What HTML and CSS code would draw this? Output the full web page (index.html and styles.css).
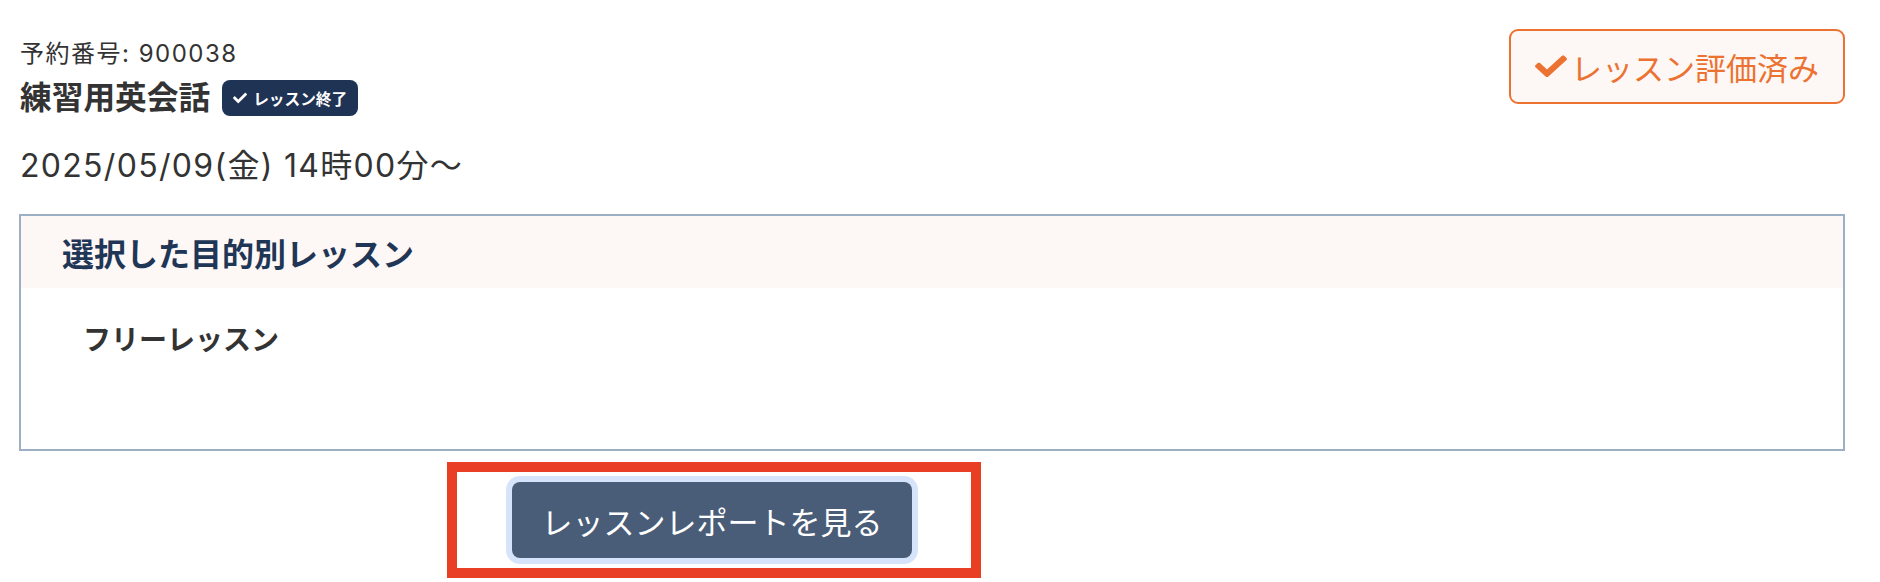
FILE: index.html
```html
<!DOCTYPE html>
<html lang="ja">
<head>
<meta charset="utf-8">
<title>予約詳細</title>
<link rel="stylesheet" href="styles.css">
</head>
<body>
<div class="page">
  <div class="top">
    <div class="info">
      <div class="resv-no">予約番号: 900038</div>
      <div class="title-row">
        <span class="title">練習用英会話</span>
        <span class="badge">
          <svg class="badge-check" viewBox="0 0 512 512"><path d="M173.898 439.404l-166.4-166.4c-9.997-9.997-9.997-26.206 0-36.204l36.203-36.204c9.997-9.998 26.207-9.998 36.204 0L192 312.69 432.095 72.596c9.997-9.997 26.207-9.997 36.204 0l36.203 36.204c9.997 9.997 9.997 26.206 0 36.204l-294.4 294.401c-9.998 9.997-26.207 9.997-36.204-.001z"/></svg>
          <span>レッスン終了</span>
        </span>
      </div>
      <div class="date">2025/05/09(金) 14時00分〜</div>
    </div>
    <button class="rated">
      <svg class="rated-check" viewBox="0 40 512 440" preserveAspectRatio="none"><path d="M173.898 439.404l-166.4-166.4c-9.997-9.997-9.997-26.206 0-36.204l36.203-36.204c9.997-9.998 26.207-9.998 36.204 0L192 312.69 432.095 72.596c9.997-9.997 26.207-9.997 36.204 0l36.203 36.204c9.997 9.997 9.997 26.206 0 36.204l-294.4 294.401c-9.998 9.997-26.207 9.997-36.204-.001z"/></svg>
      <span>レッスン評価済み</span>
    </button>
  </div>

  <section class="box">
    <div class="box-head">選択した目的別レッスン</div>
    <div class="box-body">フリーレッスン</div>
  </section>

  <div class="actions">
    <div class="highlight">
      <button class="report">レッスンレポートを見る</button>
    </div>
  </div>
</div>
</body>
</html>
```

FILE: styles.css
```css
* { box-sizing: border-box; }

html, body {
  margin: 0;
  padding: 0;
  background: #ffffff;
}

body {
  font-family: "Inter", "Noto Sans CJK JP", "Noto Sans", sans-serif;
  color: #333333;
}

.page {
  padding: 0 35px 0 19px;
}

.top {
  display: flex;
  justify-content: space-between;
  align-items: flex-start;
}

.info {
  padding-left: 1px;
  padding-top: 37px;
}

.resv-no {
  font-size: 24px;
  line-height: 34px;
  letter-spacing: 1.5px;
}

.title-row {
  display: flex;
  align-items: center;
  margin-top: 9px;
  height: 36px;
}

.title {
  font-size: 31.7px;
  font-weight: 700;
  line-height: 36px;
}

.badge {
  display: inline-flex;
  align-items: center;
  margin-left: 12px;
  height: 36px;
  padding: 0 11px;
  background: #1f3354;
  color: #ffffff;
  border-radius: 8px;
  font-size: 15.7px;
  font-weight: 700;
}

.badge-check {
  width: 14px;
  height: 14px;
  fill: #ffffff;
  margin-right: 6px;
}

.date {
  margin-top: 30px;
  font-size: 32px;
  line-height: 40px;
  letter-spacing: 1.3px;
}

.rated {
  margin-top: 29px;
  display: flex;
  align-items: center;
  height: 75px;
  padding: 0 24px;
  border: 2px solid #ec7232;
  border-radius: 9px;
  background: #fdf7f5;
  color: #ec7232;
  font-family: "Noto Sans CJK JP", sans-serif;
  font-size: 31px;
  line-height: 1;
}

.rated-check {
  width: 32px;
  height: 25px;
  fill: #ec7232;
  margin-right: 4px;
}

.box {
  margin-top: 28px;
  border: 2px solid #9dafc3;
  height: 237px;
}

.box-head {
  height: 72px;
  display: flex;
  align-items: center;
  padding-left: 41px;
  background: #fdf7f5;
  color: #1f3656;
  font-size: 32px;
  font-weight: 700;
}

.box-body {
  padding: 34px 0 0 62px;
  font-size: 28px;
  line-height: 36px;
  font-weight: 700;
  color: #333333;
}

.actions {
  margin-top: 11px;
  padding-left: 428px;
}

.highlight {
  display: inline-block;
  border: 10px solid #e83f25;
  padding: 10px 59px 10px 55px;
  background: #ffffff;
}

.report {
  display: block;
  width: 400px;
  height: 76px;
  padding: 0;
  border: none;
  border-radius: 8px;
  background: #4a5d78;
  color: #ffffff;
  font-family: "Noto Sans CJK JP", sans-serif;
  font-size: 31px;
  box-shadow: 0 0 0 6px #d6e4fb;
}
```
